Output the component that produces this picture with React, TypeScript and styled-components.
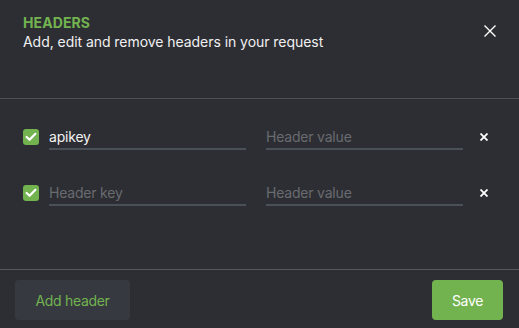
import React from "react";
import styled, { createGlobalStyle } from "styled-components";

const Global = createGlobalStyle`
  html, body { margin: 0; padding: 0; background: #2d2e33; }
  body { font-family: Inter, "Noto Sans", sans-serif; -webkit-font-smoothing: antialiased; }
  * { box-sizing: border-box; }
`;

const Modal = styled.div`
  width: 519px;
  height: 328px;
  background: #2d2e33;
  display: flex;
  flex-direction: column;
`;

const Header = styled.div`
  height: 99px;
  padding: 14px 22px 0 23px;
  display: flex;
  justify-content: space-between;
  align-items: flex-start;
  border-bottom: 1px solid #4a5056;
`;

const TitleBlock = styled.div`
  display: flex;
  flex-direction: column;
`;

const Title = styled.div`
  color: #72b350;
  font-size: 14px;
  font-weight: 700;
  line-height: 18px;
  letter-spacing: 0.1px;
`;

const Subtitle = styled.div`
  color: #f0f0f0;
  font-size: 14px;
  line-height: 20px;
  letter-spacing: -0.05px;
`;

const CloseButton = styled.button`
  background: none;
  border: none;
  padding: 0;
  margin-top: 10px;
  width: 14px;
  height: 14px;
  display: flex;
  align-items: center;
  justify-content: center;
  color: #ffffff;
  cursor: pointer;
`;

const Body = styled.div`
  flex: 1;
  padding: 10px 23px 0 23px;
  display: flex;
  flex-direction: column;
`;

const Row = styled.div`
  height: 56px;
  display: flex;
  align-items: center;
`;

const Check = styled.span`
  width: 16px;
  height: 16px;
  border-radius: 3px;
  background: #72b350;
  display: flex;
  align-items: center;
  justify-content: center;
  flex: none;
  margin-right: 10px;
`;

const Field = styled.input`
  width: 197px;
  height: 22px;
  margin-top: 4px;
  background: transparent;
  border: none;
  border-bottom: 2px solid #4a5058;
  padding: 0 0 3px 0;
  color: #f2f2f2;
  font-family: Inter, "Noto Sans", sans-serif;
  font-size: 14px;
  letter-spacing: -0.2px;
  outline: none;
  & + & { margin-left: 20px; }
  &::placeholder { color: #686b70; }
`;

const Remove = styled.button`
  background: none;
  border: none;
  padding: 0;
  margin-left: 17px;
  width: 8px;
  height: 8px;
  display: flex;
  color: #ffffff;
`;

const Footer = styled.div`
  border-top: 1px solid #58595e;
  padding: 10px 16px 8px 15px;
  display: flex;
  justify-content: space-between;
`;

const Button = styled.button<{ $primary?: boolean }>`
  height: 40px;
  border: none;
  border-radius: 4px;
  padding: 0;
  width: ${(p) => (p.$primary ? "71px" : "115px")};
  background: ${(p) => (p.$primary ? "#72b350" : "#363a40")};
  color: ${(p) => (p.$primary ? "#ffffff" : "#72b350")};
  font-family: Inter, "Noto Sans", sans-serif;
  font-size: 14px;
  letter-spacing: -0.3px;
  cursor: pointer;
`;

const CheckIcon = () => (
  <svg width="12" height="10" viewBox="0 0 12 10" fill="none">
    <path d="M1.6 5 L4.6 7.8 L10.4 1.8" stroke="#fff" strokeWidth="2.2" strokeLinecap="round" strokeLinejoin="round" />
  </svg>
);

const XIcon = ({ size, w }: { size: number; w: number }) => (
  <svg width={size} height={size} viewBox={`0 0 ${size} ${size}`}>
    <path d={`M0.5 0.5 L${size - 0.5} ${size - 0.5} M${size - 0.5} 0.5 L0.5 ${size - 0.5}`} stroke="currentColor" strokeWidth={w} />
  </svg>
);

const rows = [
  { key: "apikey", value: "" },
  { key: "", value: "" },
];

export default function App() {
  return (
    <Modal>
      <Global />
      <Header>
        <TitleBlock>
          <Title>HEADERS</Title>
          <Subtitle>Add, edit and remove headers in your request</Subtitle>
        </TitleBlock>
        <CloseButton aria-label="Close">
          <XIcon size={12} w={1.4} />
        </CloseButton>
      </Header>
      <Body>
        {rows.map((r, i) => (
          <Row key={i}>
            <Check>
              <CheckIcon />
            </Check>
            <Field defaultValue={r.key} placeholder="Header key" />
            <Field defaultValue={r.value} placeholder="Header value" />
            <Remove aria-label="Remove">
              <XIcon size={8} w={1.8} />
            </Remove>
          </Row>
        ))}
      </Body>
      <Footer>
        <Button>Add header</Button>
        <Button $primary>Save</Button>
      </Footer>
    </Modal>
  );
}
